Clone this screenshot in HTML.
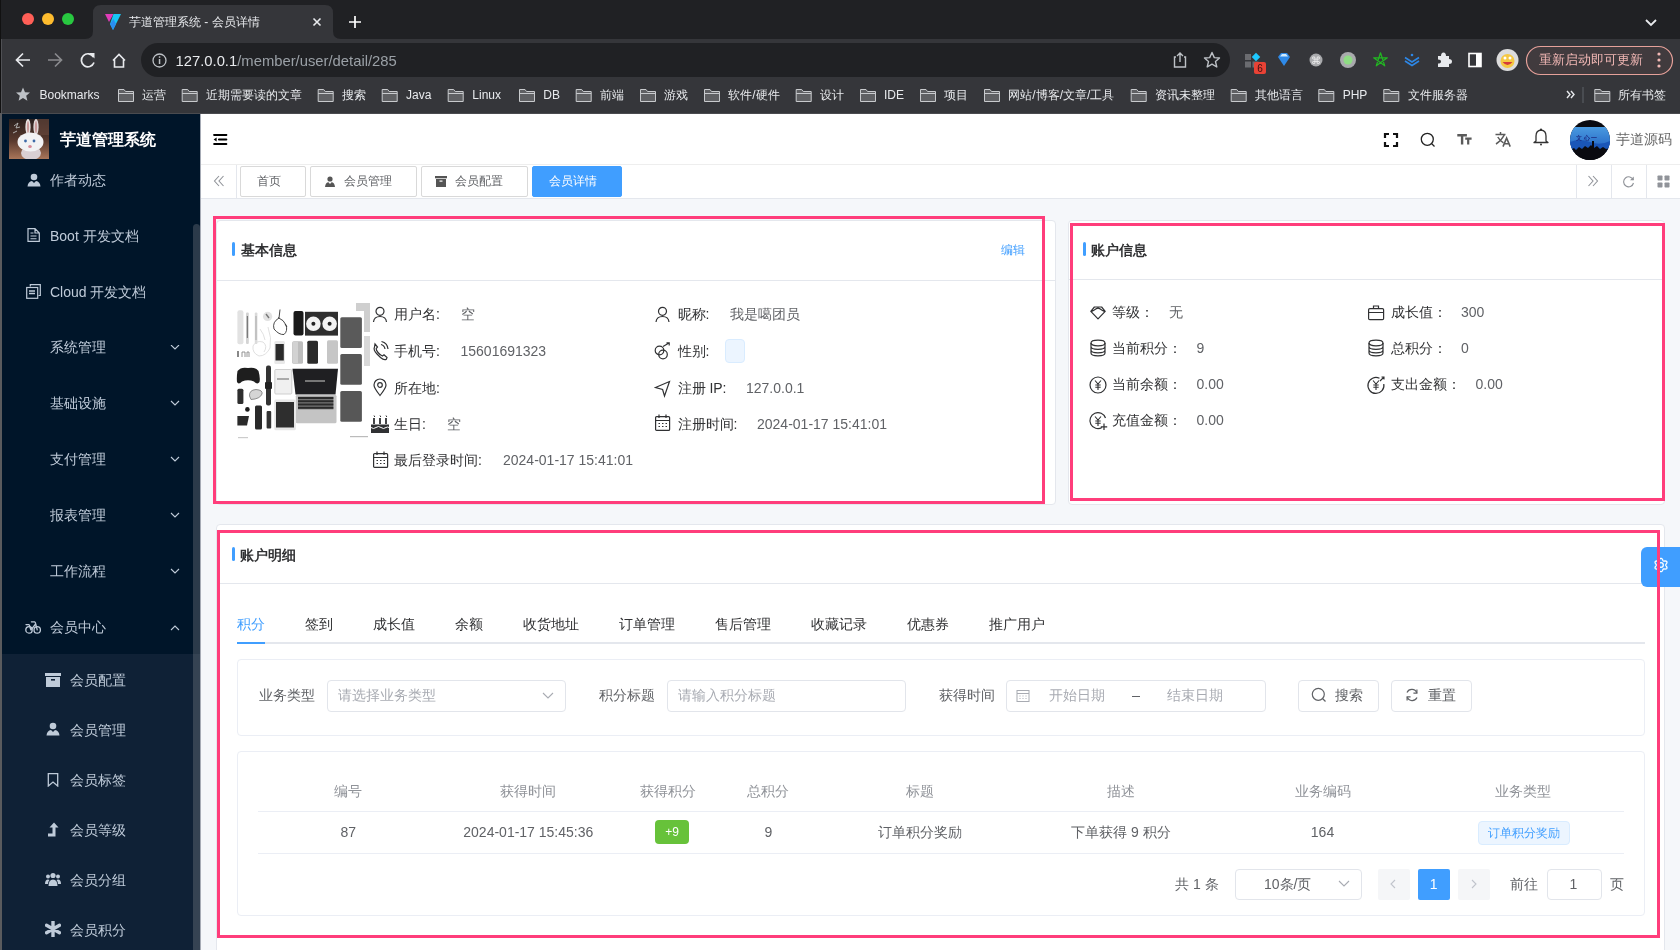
<!DOCTYPE html>
<html><head><meta charset="utf-8">
<style>html{will-change:transform}
*{box-sizing:border-box;margin:0;padding:0}
html,body{width:1680px;height:950px;overflow:hidden;background:#f5f7fa;font-family:"Liberation Sans",sans-serif;font-size:14px;color:#303133}
.a{position:absolute}
.nw{white-space:nowrap}
svg{display:block}
/* chrome */
#tabstrip{left:0;top:0;width:1680px;height:39px;background:#202124}
#toolbar{left:0;top:39px;width:1680px;height:74px;background:#35363a}
.bm{top:87px;height:16px;font-size:12px;color:#e8eaed;line-height:16px}
.fold{top:89px;width:16px;height:13px}
/* sidebar */
#side{left:0;top:114px;width:200px;height:836px;background:#001529;overflow:hidden}
.mi{left:0;width:193px;height:56px;color:#bfcbd9;font-size:14px;line-height:56px}
.mt{left:50px}
.chev{left:170px;width:10px;height:6px}
/* header */
#hdr{left:201px;top:114px;width:1479px;height:51px;background:#fff;border-bottom:1px solid #eee}
#tags{left:201px;top:165px;width:1479px;height:34px;background:#fff;border-bottom:1px solid #e4e7ed}
.tag{top:166px;height:31px;border:1px solid #d9d9d9;border-radius:2px;font-size:12px;color:#606266;line-height:29px;background:#fff}
.card{background:#fff;border:1px solid #e4e7ed;border-radius:4px}
.ttl{font-size:14px;font-weight:bold;color:#303133;line-height:16px}
.bar{width:3px;height:14px;background:#409eff;border-radius:2px}
.lab{font-size:14px;color:#303133;line-height:16px}
.val{font-size:14px;color:#606266;line-height:16px}
.red{border:3px solid #ff2d6f}
.tab{top:616px;font-size:14px;color:#303133;line-height:16px;font-weight:500}
.th{top:783px;font-size:14px;color:#909399;line-height:16px;font-weight:normal;transform:translateX(-50%)}
.td{top:824px;font-size:14px;color:#606266;line-height:16px;transform:translateX(-50%)}
.inp{border:1px solid #e2e5eb;border-radius:4px;background:#fff}
.ph{font-size:14px;color:#a8abb2;line-height:16px}
</style></head>
<body>
<!-- ============ BROWSER CHROME ============ -->

<svg class="a" style="left:0;top:0" width="1680" height="114">
 <rect x="0" y="0" width="1680" height="39" fill="#202124"/>
 <rect x="0" y="39" width="1680" height="74" fill="#35363a"/>
 <path d="M85,39 Q93,39 93,31 L93,13 Q93,5 101,5 L325,5 Q333,5 333,13 L333,31 Q333,39 341,39 Z" fill="#35363a"/>
 <rect x="0" y="113" width="1680" height="1" fill="#4a4b4f"/>
 <rect x="0" y="0" width="1" height="114" fill="#111"/>
 <rect x="1" y="39" width="1" height="75" fill="#4f5054"/>
 <circle cx="28" cy="19" r="6" fill="#ff5f57"/>
 <circle cx="48" cy="19" r="6" fill="#febc2e"/>
 <circle cx="68" cy="19" r="6" fill="#28c840"/>
 <!-- favicon -->
 <polygon points="105,14 113.5,14 109,22" fill="#e03cb8"/>
 <polygon points="113.5,14 121,14 113,30 110,24" fill="#17c6f5"/>
 <polygon points="110,24 113,30 116,24 113.5,19" fill="#2a8ef0"/>
 <!-- close x -->
 <path d="M313.5,18.5 L320.5,25.5 M320.5,18.5 L313.5,25.5" stroke="#e8eaed" stroke-width="1.6"/>
 <!-- plus -->
 <path d="M355,16 L355,28 M349,22 L361,22" stroke="#fff" stroke-width="1.7"/>
 <!-- chevron down -->
 <path d="M1646,20 L1651,25 L1656,20" stroke="#e8eaed" stroke-width="1.8" fill="none"/>
 <!-- nav icons -->
 <path d="M16,60 L30,60 M23,53.5 L16.5,60 L23,66.5" stroke="#e8eaed" stroke-width="1.7" fill="none"/>
 <path d="M48,60 L62,60 M55,53.5 L61.5,60 L55,66.5" stroke="#8a8b8e" stroke-width="1.7" fill="none"/>
 <path d="M93.5,57 A6.5,6.5 0 1 0 94,62.5" stroke="#e8eaed" stroke-width="1.7" fill="none"/>
 <polygon points="89,53 94.5,53 94.5,58.5" fill="#e8eaed"/>
 <path d="M113,60.5 L119,54.5 L125,60.5 M114.5,59 L114.5,67 L123.5,67 L123.5,59" stroke="#e8eaed" stroke-width="1.6" fill="none"/>
 <!-- omnibox -->
 <rect x="141" y="43" width="1089" height="34" rx="17" fill="#202124"/>
 <circle cx="159.5" cy="60.5" r="6.5" stroke="#bdc1c6" stroke-width="1.3" fill="none"/>
 <rect x="158.8" y="59" width="1.5" height="5" fill="#bdc1c6"/>
 <rect x="158.8" y="56.3" width="1.5" height="1.5" fill="#bdc1c6"/>
 <!-- share / star -->
 <path d="M1176,57 L1174.5,57 L1174.5,67 L1185.5,67 L1185.5,57 L1184,57 M1180,62 L1180,53 M1177,56 L1180,53 L1183,56" stroke="#bdc1c6" stroke-width="1.4" fill="none"/>
 <path d="M1212,52.5 L1214.3,57.6 L1219.5,58 L1215.5,61.6 L1216.8,67 L1212,64.2 L1207.2,67 L1208.5,61.6 L1204.5,58 L1209.7,57.6 Z" stroke="#bdc1c6" stroke-width="1.4" fill="none" stroke-linejoin="round"/>
 <!-- extensions -->
 <rect x="1245" y="54" width="6" height="6" fill="#6b6c70"/>
 <rect x="1245" y="61.5" width="6" height="6" fill="#6b6c70"/>
 <rect x="1252.5" y="61.5" width="6" height="6" fill="#6b6c70"/>
 <rect x="1253" y="54" width="6" height="6" fill="#1ec8ff" transform="rotate(45 1256 57)"/>
 <rect x="1254" y="62" width="12" height="12" rx="2" fill="#e94235"/>
 <text x="1260" y="72" font-size="10" fill="#3a1010" text-anchor="middle" font-family="Liberation Sans">6</text>
 <path d="M1278,57 L1281,53 L1287,53 L1290,57 L1284,66 Z" fill="#2f8ae8"/>
 <path d="M1280,56.5 L1282,54 L1286,54 L1288,56.5 Z" fill="#cfeaff"/>
 <circle cx="1316" cy="60" r="6.5" fill="#a9aaad"/>
 <text x="1316" y="64" font-size="10" fill="#eee" text-anchor="middle" font-family="Liberation Sans">&#x2318;</text>
 <circle cx="1348" cy="60" r="8" fill="#a9aaad"/>
 <circle cx="1348" cy="60" r="4.5" fill="#8fdc84"/>
 <path d="M1380.50,52.80 L1384.73,65.82 L1373.65,57.78 L1387.35,57.78 L1376.27,65.82 Z" stroke="#22b622" stroke-width="1.25" fill="none" stroke-linejoin="round"/>
 <path d="M1405,57.5 L1412,62 L1419,57.5 M1405,61 L1412,65.5 L1419,61" stroke="#2d87e6" stroke-width="1.6" fill="none"/>
 <circle cx="1412" cy="55" r="1.3" fill="#2d87e6"/>
 <path d="M1438,56 L1441,56 Q1441,52.5 1443.5,52.5 Q1446,52.5 1446,56 L1449,56 L1449,59 Q1452,59 1452,61.5 Q1452,64 1449,64 L1449,67 L1438,67 L1438,63.5 Q1441,63.5 1441,61.5 Q1441,59.5 1438,59.5 Z" fill="#e8eaed"/>
 <rect x="1469" y="53.5" width="12" height="13" fill="none" stroke="#fff" stroke-width="1.6"/>
 <rect x="1476" y="53.5" width="5" height="13" fill="#fff"/>
 <circle cx="1507.5" cy="60" r="11" fill="#dcdcdc"/>
 <circle cx="1507.5" cy="61" r="7" fill="#f5c842"/>
 <path d="M1502.5,62 Q1507.5,68 1512.5,62 Z" fill="#d43a3a"/>
 <circle cx="1505" cy="58" r="1.5" fill="#fff"/><circle cx="1510" cy="58" r="1.5" fill="#fff"/>
 <!-- update pill -->
 <rect x="1526.5" y="46.5" width="146" height="28" rx="14" fill="#413b3e" stroke="#e6a19a" stroke-width="1.2"/>
 <circle cx="1659" cy="54" r="1.6" fill="#f2b8b5"/><circle cx="1659" cy="60" r="1.6" fill="#f2b8b5"/><circle cx="1659" cy="66" r="1.6" fill="#f2b8b5"/>
 <!-- bookmarks bar -->
 <path d="M23,87.5 L25,92.3 L30,92.5 L26.2,95.8 L27.4,100.8 L23,98 L18.6,100.8 L19.8,95.8 L16,92.5 L21,92.3 Z" fill="#bdc1c6"/>
 <line x1="1583" y1="87" x2="1583" y2="103" stroke="#5f6368" stroke-width="1"/>
 <path d="M1567,91 L1570,94.5 L1567,98 M1571,91 L1574,94.5 L1571,98" stroke="#e8eaed" stroke-width="1.4" fill="none"/>
</svg>
<div class="a nw" style="left:129px;top:14px;font-size:12px;color:#e8eaed;line-height:16px">芋道管理系统 - 会员详情</div>
<div class="a nw" style="left:175.5px;top:52.5px;font-size:14.8px;line-height:17px;color:#9aa0a6"><span style="color:#e8eaed">127.0.0.1</span>/member/user/detail/285</div>
<div class="a nw" style="left:1539px;top:52px;font-size:13px;line-height:16px;color:#f2b8b5">重新启动即可更新</div>
<svg class="a" style="left:0;top:0" width="1680" height="114"><path d="M118.5,89.5 L124,89.5 L125.5,91.5 L133.5,91.5 L133.5,101.5 L118.5,101.5 Z" fill="#5f6063" stroke="#c8cacd" stroke-width="1"/><line x1="118.5" y1="93.5" x2="133.5" y2="93.5" stroke="#c8cacd" stroke-width="1"/><path d="M182.2,89.5 L187.7,89.5 L189.2,91.5 L197.2,91.5 L197.2,101.5 L182.2,101.5 Z" fill="#5f6063" stroke="#c8cacd" stroke-width="1"/><line x1="182.2" y1="93.5" x2="197.2" y2="93.5" stroke="#c8cacd" stroke-width="1"/><path d="M318.2,89.5 L323.7,89.5 L325.2,91.5 L333.2,91.5 L333.2,101.5 L318.2,101.5 Z" fill="#5f6063" stroke="#c8cacd" stroke-width="1"/><line x1="318.2" y1="93.5" x2="333.2" y2="93.5" stroke="#c8cacd" stroke-width="1"/><path d="M382.2,89.5 L387.7,89.5 L389.2,91.5 L397.2,91.5 L397.2,101.5 L382.2,101.5 Z" fill="#5f6063" stroke="#c8cacd" stroke-width="1"/><line x1="382.2" y1="93.5" x2="397.2" y2="93.5" stroke="#c8cacd" stroke-width="1"/><path d="M448.2,89.5 L453.7,89.5 L455.2,91.5 L463.2,91.5 L463.2,101.5 L448.2,101.5 Z" fill="#5f6063" stroke="#c8cacd" stroke-width="1"/><line x1="448.2" y1="93.5" x2="463.2" y2="93.5" stroke="#c8cacd" stroke-width="1"/><path d="M519.5,89.5 L525,89.5 L526.5,91.5 L534.5,91.5 L534.5,101.5 L519.5,101.5 Z" fill="#5f6063" stroke="#c8cacd" stroke-width="1"/><line x1="519.5" y1="93.5" x2="534.5" y2="93.5" stroke="#c8cacd" stroke-width="1"/><path d="M576.2,89.5 L581.7,89.5 L583.2,91.5 L591.2,91.5 L591.2,101.5 L576.2,101.5 Z" fill="#5f6063" stroke="#c8cacd" stroke-width="1"/><line x1="576.2" y1="93.5" x2="591.2" y2="93.5" stroke="#c8cacd" stroke-width="1"/><path d="M640.5,89.5 L646,89.5 L647.5,91.5 L655.5,91.5 L655.5,101.5 L640.5,101.5 Z" fill="#5f6063" stroke="#c8cacd" stroke-width="1"/><line x1="640.5" y1="93.5" x2="655.5" y2="93.5" stroke="#c8cacd" stroke-width="1"/><path d="M704.5,89.5 L710,89.5 L711.5,91.5 L719.5,91.5 L719.5,101.5 L704.5,101.5 Z" fill="#5f6063" stroke="#c8cacd" stroke-width="1"/><line x1="704.5" y1="93.5" x2="719.5" y2="93.5" stroke="#c8cacd" stroke-width="1"/><path d="M796.2,89.5 L801.7,89.5 L803.2,91.5 L811.2,91.5 L811.2,101.5 L796.2,101.5 Z" fill="#5f6063" stroke="#c8cacd" stroke-width="1"/><line x1="796.2" y1="93.5" x2="811.2" y2="93.5" stroke="#c8cacd" stroke-width="1"/><path d="M860.5,89.5 L866,89.5 L867.5,91.5 L875.5,91.5 L875.5,101.5 L860.5,101.5 Z" fill="#5f6063" stroke="#c8cacd" stroke-width="1"/><line x1="860.5" y1="93.5" x2="875.5" y2="93.5" stroke="#c8cacd" stroke-width="1"/><path d="M920.5,89.5 L926,89.5 L927.5,91.5 L935.5,91.5 L935.5,101.5 L920.5,101.5 Z" fill="#5f6063" stroke="#c8cacd" stroke-width="1"/><line x1="920.5" y1="93.5" x2="935.5" y2="93.5" stroke="#c8cacd" stroke-width="1"/><path d="M984.5,89.5 L990,89.5 L991.5,91.5 L999.5,91.5 L999.5,101.5 L984.5,101.5 Z" fill="#5f6063" stroke="#c8cacd" stroke-width="1"/><line x1="984.5" y1="93.5" x2="999.5" y2="93.5" stroke="#c8cacd" stroke-width="1"/><path d="M1131.2,89.5 L1136.7,89.5 L1138.2,91.5 L1146.2,91.5 L1146.2,101.5 L1131.2,101.5 Z" fill="#5f6063" stroke="#c8cacd" stroke-width="1"/><line x1="1131.2" y1="93.5" x2="1146.2" y2="93.5" stroke="#c8cacd" stroke-width="1"/><path d="M1231.2,89.5 L1236.7,89.5 L1238.2,91.5 L1246.2,91.5 L1246.2,101.5 L1231.2,101.5 Z" fill="#5f6063" stroke="#c8cacd" stroke-width="1"/><line x1="1231.2" y1="93.5" x2="1246.2" y2="93.5" stroke="#c8cacd" stroke-width="1"/><path d="M1318.8,89.5 L1324.3,89.5 L1325.8,91.5 L1333.8,91.5 L1333.8,101.5 L1318.8,101.5 Z" fill="#5f6063" stroke="#c8cacd" stroke-width="1"/><line x1="1318.8" y1="93.5" x2="1333.8" y2="93.5" stroke="#c8cacd" stroke-width="1"/><path d="M1383.8,89.5 L1389.3,89.5 L1390.8,91.5 L1398.8,91.5 L1398.8,101.5 L1383.8,101.5 Z" fill="#5f6063" stroke="#c8cacd" stroke-width="1"/><line x1="1383.8" y1="93.5" x2="1398.8" y2="93.5" stroke="#c8cacd" stroke-width="1"/><path d="M1594.8,89.5 L1600.3,89.5 L1601.8,91.5 L1609.8,91.5 L1609.8,101.5 L1594.8,101.5 Z" fill="#5f6063" stroke="#c8cacd" stroke-width="1"/><line x1="1594.8" y1="93.5" x2="1609.8" y2="93.5" stroke="#c8cacd" stroke-width="1"/></svg>
<div class="a nw bm" style="left:39.5px">Bookmarks</div>
<div class="a nw bm" style="left:142px">运营</div>
<div class="a nw bm" style="left:206.3px">近期需要读的文章</div>
<div class="a nw bm" style="left:342.3px">搜索</div>
<div class="a nw bm" style="left:406px">Java</div>
<div class="a nw bm" style="left:472.3px">Linux</div>
<div class="a nw bm" style="left:543.3px">DB</div>
<div class="a nw bm" style="left:600px">前端</div>
<div class="a nw bm" style="left:664px">游戏</div>
<div class="a nw bm" style="left:728.3px">软件/硬件</div>
<div class="a nw bm" style="left:820px">设计</div>
<div class="a nw bm" style="left:884px">IDE</div>
<div class="a nw bm" style="left:944px">项目</div>
<div class="a nw bm" style="left:1008.3px">网站/博客/文章/工具</div>
<div class="a nw bm" style="left:1155px">资讯未整理</div>
<div class="a nw bm" style="left:1255px">其他语言</div>
<div class="a nw bm" style="left:1342.7px">PHP</div>
<div class="a nw bm" style="left:1407.7px">文件服务器</div>
<div class="a nw bm" style="left:1618.3px">所有书签</div>
<!-- ============ SIDEBAR ============ -->
<div id="side" class="a">
 <svg class="a" style="left:9px;top:5px" width="40" height="40" viewBox="0 0 40 40">
  <defs><linearGradient id="rb" x1="0" y1="0" x2="0" y2="1"><stop offset="0" stop-color="#2a201e"/><stop offset="0.55" stop-color="#5a3a2e"/><stop offset="1" stop-color="#a9765a"/></linearGradient></defs>
  <rect width="40" height="40" fill="url(#rb)"/>
  <rect x="26" y="0" width="14" height="16" fill="#6a4a3e" opacity="0.6"/>
  <ellipse cx="19" cy="8" rx="2.6" ry="8" fill="#e9e4e4"/><ellipse cx="27" cy="8" rx="2.6" ry="8" fill="#e0d8d8"/>
  <ellipse cx="19" cy="8" rx="1.1" ry="6" fill="#c99a9a"/><ellipse cx="27" cy="8" rx="1.1" ry="6" fill="#c99a9a"/>
  <ellipse cx="22" cy="34" rx="10" ry="7" fill="#d9cfd3"/>
  <ellipse cx="21.5" cy="23" rx="13" ry="9.5" fill="#f2f2f4"/>
  <circle cx="16.5" cy="22" r="1.4" fill="#3d6aa8"/><circle cx="25" cy="22" r="1.4" fill="#3d6aa8"/>
  <ellipse cx="21" cy="27.5" rx="1.8" ry="1.5" fill="#d88a98"/>
  <path d="M5,7 L9,4 L7,9 L11,8 M4,14 L8,12" stroke="#bbb" stroke-width="0.9" fill="none"/>
 </svg>
 <div class="a nw" style="left:60px;top:17px;font-size:16px;font-weight:bold;color:#fff;line-height:18px">芋道管理系统</div>
 <!-- top-level items -->
 <svg class="a" style="left:27px;top:59px" width="14" height="14" viewBox="0 0 14 14"><circle cx="7" cy="4" r="3.3" fill="#bfcbd9"/><path d="M0.5,13.5 Q1,8.5 5,8 L7,10 L9,8 Q13,8.5 13.5,13.5 Z" fill="#bfcbd9"/></svg>
 <div class="a nw mi" style="top:38px"><span class="a mt">作者动态</span></div>
 <svg class="a" style="left:27px;top:114px" width="13" height="14" viewBox="0 0 13 14"><path d="M1,0.7 L8,0.7 L12.3,5 L12.3,13.3 L1,13.3 Z M8,0.7 L8,5 L12.3,5" fill="none" stroke="#bfcbd9" stroke-width="1.2"/><path d="M3.5,5 L6.5,5 M3.5,8 L9.5,8 M3.5,10.8 L9.5,10.8" stroke="#bfcbd9" stroke-width="1.1"/></svg>
 <div class="a nw mi" style="top:94px"><span class="a mt">Boot 开发文档</span></div>
 <svg class="a" style="left:26px;top:170px" width="15" height="15" viewBox="0 0 15 15"><path d="M4.3,2.5 L4.3,0.7 L14.3,0.7 L14.3,11.5 L12.5,11.5" fill="none" stroke="#bfcbd9" stroke-width="1.2"/><rect x="0.7" y="3.5" width="11" height="10.8" fill="none" stroke="#bfcbd9" stroke-width="1.2"/><path d="M3,7 L9,7 M3,9.5 L9,9.5" stroke="#bfcbd9" stroke-width="1.3"/></svg>
 <div class="a nw mi" style="top:150px"><span class="a mt">Cloud 开发文档</span></div>
 <div class="a nw mi" style="top:205px"><span class="a mt">系统管理</span></div>
 <div class="a nw mi" style="top:261px"><span class="a mt">基础设施</span></div>
 <div class="a nw mi" style="top:317px"><span class="a mt">支付管理</span></div>
 <div class="a nw mi" style="top:373px"><span class="a mt">报表管理</span></div>
 <div class="a nw mi" style="top:429px"><span class="a mt">工作流程</span></div>
 <svg class="a" style="left:25px;top:506px" width="16" height="14" viewBox="0 0 16 14"><circle cx="4" cy="9.9" r="3.2" fill="none" stroke="#bfcbd9" stroke-width="1.3"/><circle cx="12.2" cy="9.9" r="3.2" fill="none" stroke="#bfcbd9" stroke-width="1.3"/><path d="M1,4.6 L3.8,4.6 Q4.8,5 5.4,8.6 L6,9.9 M6.4,1.8 L9.6,1.8 Q10.3,2 10.6,3.5 L12.2,9.9 M6,9.9 L10.6,4" fill="none" stroke="#bfcbd9" stroke-width="1.3" stroke-linecap="round"/></svg>
 <div class="a nw mi" style="top:485px"><span class="a mt">会员中心</span></div>
 <svg class="a" style="left:170px;top:231px" width="10" height="250" viewBox="0 0 10 250">
  <path d="M1,0 L5,4 L9,0 M1,56 L5,60 L9,56 M1,112 L5,116 L9,112 M1,168 L5,172 L9,168 M1,224 L5,228 L9,224" fill="none" stroke="#bfcbd9" stroke-width="1.1"/>
 </svg>
 <svg class="a" style="left:170px;top:511px" width="10" height="6" viewBox="0 0 10 6"><path d="M1,5 L5,1 L9,5" fill="none" stroke="#bfcbd9" stroke-width="1.1"/></svg>
 <!-- submenu -->
 <div class="a" style="left:0;top:540px;width:200px;height:296px;background:#0f2136"></div>
 <svg class="a" style="left:45px;top:559px" width="16" height="14" viewBox="0 0 16 14"><rect x="0" y="0" width="16" height="3" fill="#bfcbd9"/><path d="M1,4 L15,4 L15,14 L1,14 Z" fill="#bfcbd9"/><rect x="6" y="6" width="4" height="1.6" fill="#0f2136"/></svg>
 <div class="a nw mi" style="top:541px;height:50px;line-height:50px"><span class="a" style="left:70px">会员配置</span></div>
 <svg class="a" style="left:46px;top:608px" width="14" height="14" viewBox="0 0 14 14"><circle cx="7" cy="4" r="3.3" fill="#bfcbd9"/><path d="M0.5,13.5 Q1,8.5 5,8 L7,10 L9,8 Q13,8.5 13.5,13.5 Z" fill="#bfcbd9"/></svg>
 <div class="a nw mi" style="top:591px;height:50px;line-height:50px"><span class="a" style="left:70px">会员管理</span></div>
 <svg class="a" style="left:47px;top:659px" width="12" height="14" viewBox="0 0 12 14"><path d="M1.3,0.7 L10.7,0.7 L10.7,13 L6,9 L1.3,13 Z" fill="none" stroke="#bfcbd9" stroke-width="1.3"/></svg>
 <div class="a nw mi" style="top:641px;height:50px;line-height:50px"><span class="a" style="left:70px">会员标签</span></div>
 <svg class="a" style="left:47px;top:708px" width="12" height="15" viewBox="0 0 12 15"><path d="M7,0.5 L11.5,5.5 L8.5,5.5 L8.5,14.5 L1,14.5 L1,11.5 L5.5,11.5 L5.5,5.5 L2.5,5.5 Z" fill="#bfcbd9"/></svg>
 <div class="a nw mi" style="top:691px;height:50px;line-height:50px"><span class="a" style="left:70px">会员等级</span></div>
 <svg class="a" style="left:45px;top:758px" width="16" height="14" viewBox="0 0 16 14"><circle cx="8" cy="3.5" r="2.6" fill="#bfcbd9"/><circle cx="3" cy="4.5" r="2" fill="#bfcbd9"/><circle cx="13" cy="4.5" r="2" fill="#bfcbd9"/><path d="M3.5,14 Q3.5,7.5 8,7.5 Q12.5,7.5 12.5,14 Z" fill="#bfcbd9"/><path d="M0,12 Q0,7.5 3,7.5 Q4,7.5 4.5,8 Q3,9.5 3,12 Z M16,12 Q16,7.5 13,7.5 Q12,7.5 11.5,8 Q13,9.5 13,12 Z" fill="#bfcbd9"/></svg>
 <div class="a nw mi" style="top:741px;height:50px;line-height:50px"><span class="a" style="left:70px">会员分组</span></div>
 <svg class="a" style="left:45px;top:807px" width="16" height="16" viewBox="0 0 16 16"><path d="M8,0.5 L8,15.5 M1.5,4.25 L14.5,11.75 M1.5,11.75 L14.5,4.25" stroke="#bfcbd9" stroke-width="3.4" stroke-linecap="round"/></svg>
 <div class="a nw mi" style="top:791px;height:50px;line-height:50px"><span class="a" style="left:70px">会员积分</span></div>
 <!-- scrollbar -->
 <div class="a" style="left:193px;top:110px;width:7px;height:740px;border-radius:4px;background:rgba(144,147,153,0.3)"></div>
</div>
<div class="a" style="left:200px;top:114px;width:1px;height:836px;background:#a6abb5"></div>
<div class="a" style="left:0;top:113px;width:2px;height:837px;background:#5a5b5e"></div>
<!-- ============ HEADER ============ -->
<div id="hdr" class="a">
 <svg class="a" style="left:12px;top:20px" width="15" height="12" viewBox="0 0 15 12"><path d="M1.2,1 L13.3,1 M6,5.5 L13.3,5.5 M1.2,10 L13.3,10" stroke="#000" stroke-width="2.1" stroke-linecap="round"/><path d="M0.6,5.5 L3.6,3.6 L3.6,7.4 Z" fill="#000"/></svg>
 <!-- fullscreen -->
 <svg class="a" style="left:1182px;top:18px" width="16" height="16" viewBox="0 0 16 16"><path d="M2,6 L2,2 L6,2 M10,2 L14,2 L14,6 M14,10 L14,14 L10,14 M6,14 L2,14 L2,10" fill="none" stroke="#111" stroke-width="2.2"/></svg>
 <!-- search -->
 <svg class="a" style="left:1219px;top:18px" width="16" height="16" viewBox="0 0 16 16"><circle cx="7.3" cy="7.3" r="6" fill="none" stroke="#222" stroke-width="1.3"/><path d="M11.5,11.5 L14.5,14.5" stroke="#222" stroke-width="1.3"/></svg>
 <!-- Tt -->
 <svg class="a" style="left:1256px;top:19px" width="16" height="14" viewBox="0 0 16 14"><path d="M0.3,2.2 L9.9,2.2 M5.1,2 L5.1,11.6" stroke="#5a5a5a" stroke-width="2.4"/><path d="M8.2,5.6 L14.6,5.6 M11.2,5.5 L11.2,11.6" stroke="#5a5a5a" stroke-width="2.2"/></svg>
 <!-- translate -->
 <svg class="a" style="left:1293px;top:17px" width="18" height="17" viewBox="0 0 18 17"><path d="M6.5,1 L6.5,3.2 M1.5,3.6 L11.5,3.6 M10.3,4 Q7,10 2,13 M3.8,6 Q6,10 9.5,11.8" fill="none" stroke="#5a5a5a" stroke-width="1.5"/><path d="M9,15.6 L12.6,7 L16.2,15.6 M10.3,12.8 L14.9,12.8" fill="none" stroke="#5a5a5a" stroke-width="1.6"/></svg>
 <!-- bell -->
 <svg class="a" style="left:1331px;top:14px" width="18" height="18" viewBox="0 0 18 18"><path d="M9,2 Q4,2.5 4,8 L4,13 L2,14.5 L16,14.5 L14,13 L14,8 Q14,2.5 9,2 Z" fill="none" stroke="#333" stroke-width="1.3" stroke-linejoin="round"/><circle cx="9" cy="1.6" r="1.1" fill="#333"/><circle cx="9" cy="16.6" r="1" fill="#333"/></svg>
 <!-- avatar -->
 <svg class="a" style="left:1369px;top:6px" width="40" height="40" viewBox="0 0 40 40">
  <defs><clipPath id="cc"><circle cx="20" cy="20" r="20"/></clipPath><linearGradient id="bl" x1="0" y1="0" x2="0" y2="1"><stop offset="0" stop-color="#4a9ae0"/><stop offset="1" stop-color="#1f5fc0"/></linearGradient></defs>
  <g clip-path="url(#cc)">
   <rect width="40" height="40" fill="#0a0a10"/>
   <rect x="0" y="7" width="40" height="25" fill="url(#bl)"/>
   <path d="M0,22 Q10,18 20,22 T40,21 L40,30 L0,30 Z" fill="#1a56b8"/>
   <text x="6" y="20" font-size="6" fill="#1b2a80" font-weight="bold">文 心 一</text>
   <path d="M0,30 L4,28 L6,30 L9,27 L12,29 L15,26 L18,28 L21,25 L24,28 L27,26 L30,29 L33,27 L36,29 L40,28 L40,40 L0,40 Z" fill="#0a0a10"/>
   <rect x="22" y="21" width="2" height="10" fill="#0a0a10"/>
  </g>
 </svg>
 <div class="a nw" style="left:1415px;top:17px;font-size:14px;color:#666;line-height:16px">芋道源码</div>
</div>
<!-- ============ TAGS ============ -->
<div id="tags" class="a">
 <div class="a" style="left:35px;top:0;width:1px;height:33px;background:#e4e7ed"></div>
 <svg class="a" style="left:12px;top:10px" width="12" height="12" viewBox="0 0 12 12"><path d="M6,1 L1.5,6 L6,11 M10.5,1 L6,6 L10.5,11" fill="none" stroke="#909399" stroke-width="1.1"/></svg>
 <div class="a" style="left:1375px;top:0;width:1px;height:33px;background:#e4e7ed"></div>
 <div class="a" style="left:1410px;top:0;width:1px;height:33px;background:#e4e7ed"></div>
 <div class="a" style="left:1445px;top:0;width:1px;height:33px;background:#e4e7ed"></div>
 <svg class="a" style="left:1386px;top:10px" width="12" height="12" viewBox="0 0 12 12"><path d="M1.5,1 L6,6 L1.5,11 M6,1 L10.5,6 L6,11" fill="none" stroke="#909399" stroke-width="1.1"/></svg>
 <svg class="a" style="left:1421px;top:10px" width="13" height="13" viewBox="0 0 13 13"><path d="M11.3,5 A5,5 0 1 0 11.5,8" fill="none" stroke="#909399" stroke-width="1.1"/><path d="M11.8,1.5 L11.8,5.3 L8,5.3 Z" fill="#909399"/></svg>
 <svg class="a" style="left:1456px;top:10px" width="13" height="13" viewBox="0 0 13 13"><rect x="0.5" y="0.5" width="5" height="5" rx="0.8" fill="#909399"/><rect x="7.5" y="0.5" width="5" height="5" rx="0.8" fill="#909399"/><rect x="0.5" y="7.5" width="5" height="5" rx="0.8" fill="#909399"/><rect x="7.5" y="7.5" width="5" height="5" rx="0.8" fill="#909399"/></svg>
</div>
<div class="a tag" style="left:240px;width:66px"><span class="a nw" style="left:16px;top:0">首页</span></div>
<div class="a tag" style="left:310px;width:107px"><svg class="a" style="left:14px;top:9px" width="10" height="11" viewBox="0 0 10 11"><circle cx="5" cy="3" r="2.6" fill="#555"/><path d="M0,11 Q0.5,6.5 3.5,6.3 L5,8 L6.5,6.3 Q9.5,6.5 10,11 Z" fill="#555"/></svg><span class="a nw" style="left:33px;top:0">会员管理</span></div>
<div class="a tag" style="left:421px;width:107px"><svg class="a" style="left:13px;top:9px" width="12" height="11" viewBox="0 0 12 11"><rect x="0" y="0" width="12" height="2.3" fill="#555"/><rect x="1" y="3" width="10" height="8" fill="#555"/><rect x="4.5" y="4.5" width="3" height="1.2" fill="#fff"/></svg><span class="a nw" style="left:33px;top:0">会员配置</span></div>
<div class="a tag" style="left:532px;width:90px;background:#409eff;border-color:#409eff;color:#fff"><span class="a nw" style="left:16px;top:0">会员详情</span></div>
<!-- ============ CARD 1 ============ -->
<div class="a card" style="left:216px;top:220px;width:840px;height:285px">
 <div class="a" style="left:0;top:59px;width:838px;height:1px;background:#e4e7ed"></div>
</div>
<div class="a bar" style="left:232px;top:242px"></div>
<div class="a nw ttl" style="left:241px;top:242px">基本信息</div>
<div class="a nw" style="left:1001px;top:242px;font-size:12px;color:#409eff;line-height:16px">编辑</div>
<svg class="a" style="left:232px;top:298px" width="140" height="146" viewBox="0 0 140 146">
 <rect x="5" y="4" width="133" height="138" fill="#fff"/>
 <rect x="5.4" y="12.3" width="6" height="34" rx="2" fill="#e2e2e2"/>
 <rect x="14" y="14.5" width="2.8" height="31.5" rx="1" fill="#d4d4d4"/><rect x="14.8" y="18" width="1.2" height="22" fill="#7a7a7a"/>
 <rect x="22.8" y="14.5" width="2.6" height="31.5" rx="1" fill="#dadada"/><rect x="23.5" y="18" width="1" height="24" fill="#aaa"/>
 <circle cx="35.6" cy="18.4" r="4.6" fill="#e2e2e2"/><path d="M34,16 L37,20" stroke="#777" stroke-width="1.4"/>
 <path d="M48,11.5 L47,20 Q40,24 42,31 Q47,37 52,36.5 Q56,33 54,27 Q52,22 46,19.5 M53,26 L55,29" fill="none" stroke="#333" stroke-width="0.9"/>
 <path d="M36,29 Q40,40 38,50 Q34,58 27,58 Q20,55 21,48 Q24,42 31,44 Q36,48 32,54 M28,31 Q32,36 33,42" fill="none" stroke="#dcdcdc" stroke-width="0.9"/>
 <rect x="61.5" y="13" width="10" height="24.6" rx="2" fill="#1a1a1a"/>
 <rect x="73" y="13.8" width="33" height="23.8" fill="#2e2e2e"/>
 <circle cx="81.4" cy="25.8" r="7.3" fill="#f2f2f2"/><circle cx="81.4" cy="25.8" r="2" fill="#222"/>
 <circle cx="97.6" cy="25.8" r="7.3" fill="#f2f2f2"/><circle cx="97.6" cy="25.8" r="2" fill="#222"/>
 <rect x="108.3" y="19.2" width="21.6" height="30.8" rx="1.5" fill="#5a5a5a"/>
 <path d="M124,5 L138,5 L138,34 L132,34 L132,13 L124,13 Z" fill="#cfcfcf"/>
 <rect x="132" y="38" width="6" height="30" fill="#d8d8d8"/>
 <rect x="5" y="53" width="2" height="6" fill="#888"/><path d="M10,59 L10,54 L13,54 L13,59 M15,59 L15,54 L17,54 L17,59" fill="none" stroke="#888" stroke-width="0.9"/>
 <rect x="42.3" y="43" width="10.7" height="23" rx="1.5" fill="#e8e8e8"/><rect x="43.5" y="46" width="8.3" height="16.5" fill="#2a2a2a"/>
 <rect x="60.2" y="43.3" width="10.8" height="22.5" rx="1.5" fill="#bdbdbd"/><rect x="61" y="44" width="5" height="21" fill="#d2d2d2"/>
 <rect x="75.3" y="42.7" width="10.7" height="23" rx="1.5" fill="#2a2a2a"/>
 <rect x="95" y="42.3" width="11" height="23.5" rx="1.5" fill="#c6c6c6"/>
 <rect x="108.3" y="56" width="21.6" height="30.8" rx="1.5" fill="#575757"/>
 <path d="M5.5,73 Q9,68.5 16,70 Q23,68.5 26.5,73 Q28.5,80 27.5,84 Q25.5,87 22,83.5 Q16,81 10,83.5 Q6.5,87 5,84 Q4.5,79 5.5,73 Z" fill="#1e1e1e"/>
 <rect x="34" y="67.6" width="5" height="40" rx="2" fill="#333"/><rect x="33" y="84" width="7" height="7" rx="1" fill="#222"/>
 <rect x="42.8" y="71.5" width="17" height="24.5" rx="1" fill="#f0f0f0" stroke="#c4c4c4" stroke-width="0.8"/><rect x="45" y="80" width="12" height="2" fill="#aaa"/>
 <path d="M60.5,70.7 L106,70.7 L103.5,96.5 L63.5,96.5 Z" fill="#1f1f22"/><rect x="73" y="82" width="20" height="2" fill="#777"/>
 <rect x="63.8" y="96.8" width="40.7" height="28.5" rx="1.5" fill="#c4c4c4"/>
 <rect x="66" y="98.5" width="35.4" height="13" fill="#8a8a8a"/><rect x="66" y="99.0" width="35.4" height="2.2" fill="#2a2a2a"/><rect x="66" y="102.2" width="35.4" height="2.2" fill="#2a2a2a"/><rect x="66" y="105.4" width="35.4" height="2.2" fill="#2a2a2a"/><rect x="66" y="108.6" width="35.4" height="2.2" fill="#2a2a2a"/>
 <rect x="108.3" y="93" width="21.6" height="30.7" rx="1.5" fill="#575757"/>
 <rect x="5.4" y="90.7" width="6" height="15.3" rx="1.5" fill="#2e2e2e"/>
 <path d="M17.5,98 Q17,92 24,91.5 Q31,92 30,96 Q28,101 19,101.5 Z" fill="#d5d5d5" stroke="#777" stroke-width="0.8"/>
 <rect x="23" y="107.6" width="7" height="23.8" rx="1.5" fill="#2a2a2a"/>
 <rect x="34.6" y="113" width="4.6" height="17.6" rx="1" fill="#333"/>
 <rect x="42.3" y="101.4" width="21.5" height="30.8" rx="1.5" fill="#e6e6e6"/><rect x="44" y="104" width="18" height="25.5" fill="#2e2e2e"/>
 <path d="M5.4,118 L17,118 L15,127.6 L5.4,127.6 Z" fill="#2a2a2a"/>
 <circle cx="15.4" cy="111.4" r="2.3" fill="#1a1a1a"/>
 <rect x="6" y="139" width="10" height="1.2" fill="#ccc"/><rect x="118" y="138" width="18" height="1.2" fill="#bbb"/>
</svg>
<!-- desc col 1 -->
<svg class="a" style="left:372px;top:306px" width="17" height="162" viewBox="0 0 17 162" fill="none" stroke="#303133" stroke-width="1.2">
 <circle cx="8" cy="5.3" r="4"/><path d="M1.5,16 Q2,10.5 8,10.5 Q14,10.5 14.5,16"/>
 <path d="M2.5,41 Q1,44 5,48 L8.5,51.5 Q12.5,55 14.5,53 L15,51.5 L12,48.8 L10.4,50 Q8.5,49.5 6,46.5 Q4,44 4.2,42.5 L5.5,41 L3,38 Z"/><path d="M9,38.5 Q12.5,39.5 13,43 M9.5,35.5 Q15.5,37 16,43"/>
 <path d="M8,89.5 Q2,82 2,79 A6,6 0 0 1 14,79 Q14,82 8,89.5 Z"/><circle cx="8" cy="79" r="2.3"/>
</svg>
<svg class="a" style="left:370px;top:415px" width="20" height="18" viewBox="0 0 20 18"><path d="M1,9.5 L19,9.5 L19,18 L1,18 Z" fill="#303133"/><path d="M1,12.5 Q3.5,14.5 6,12.5 Q8.5,10.5 11,12.5 Q13.5,14.5 16,12.5 Q17.5,11.5 19,12.5" stroke="#fff" stroke-width="1" fill="none"/><path d="M4,3 L4,9 M10,3 L10,9 M16,3 L16,9" stroke="#303133" stroke-width="1.8"/><path d="M4,0.5 L4.8,2 M10,0.5 L10.8,2 M16,0.5 L16.8,2" stroke="#303133" stroke-width="1"/></svg>
<svg class="a" style="left:372px;top:451px" width="17" height="17" viewBox="0 0 17 17" fill="none" stroke="#303133" stroke-width="1.2"><rect x="1.6" y="2.6" width="14" height="13.8" rx="1"/><path d="M1.6,6.5 L15.6,6.5 M5,0.5 L5,4 M12,0.5 L12,4"/><path d="M4.5,9.5 L6,9.5 M8,9.5 L9.5,9.5 M11.5,9.5 L13,9.5 M4.5,12.5 L6,12.5 M8,12.5 L9.5,12.5 M11.5,12.5 L13,12.5" stroke-width="1"/></svg>
<div class="a nw lab" style="left:394px;top:306px">用户名:</div><div class="a nw val" style="left:460.5px;top:306px">空</div>
<div class="a nw lab" style="left:394px;top:343px">手机号:</div><div class="a nw val" style="left:460.5px;top:343px">15601691323</div>
<div class="a nw lab" style="left:394px;top:380px">所在地:</div>
<div class="a nw lab" style="left:394px;top:416px">生日:</div><div class="a nw val" style="left:447px;top:416px">空</div>
<div class="a nw lab" style="left:394px;top:452px">最后登录时间:</div><div class="a nw val" style="left:503px;top:452px">2024-01-17 15:41:01</div>
<!-- desc col 2 -->
<svg class="a" style="left:654px;top:306px" width="18" height="126" viewBox="0 0 18 126" fill="none" stroke="#303133" stroke-width="1.2">
 <circle cx="8.5" cy="5.3" r="4"/><path d="M2,16 Q2.5,10.5 8.5,10.5 Q14.5,10.5 15,16"/>
 <circle cx="5.5" cy="44.5" r="4.3"/><circle cx="9" cy="48.5" r="4.3"/><path d="M9,40.5 L15,37 M12.5,36.8 L15.2,36.8 L15.2,39.5"/>
 <path d="M1.5,81.5 L15.5,75.5 L10.5,90 L8.6,83.5 Z"/>
 <rect x="1.6" y="110.6" width="14" height="13.8" rx="1"/><path d="M1.6,114.5 L15.6,114.5 M5,108.5 L5,112 M12,108.5 L12,112"/><path d="M4.5,117.5 L6,117.5 M8,117.5 L9.5,117.5 M11.5,117.5 L13,117.5 M4.5,120.5 L6,120.5 M8,120.5 L9.5,120.5 M11.5,120.5 L13,120.5" stroke-width="1"/>
</svg>
<div class="a nw lab" style="left:677.5px;top:306px">昵称:</div><div class="a nw val" style="left:729.5px;top:306px">我是噶团员</div>
<div class="a nw lab" style="left:677.5px;top:343px">性别:</div><div class="a" style="left:725px;top:339px;width:19.5px;height:23.5px;background:#ecf5ff;border:1px solid #d9ecff;border-radius:4px"></div>
<div class="a nw lab" style="left:677.5px;top:380px">注册 IP:</div><div class="a nw val" style="left:746px;top:380px">127.0.0.1</div>
<div class="a nw lab" style="left:677.5px;top:416px">注册时间:</div><div class="a nw val" style="left:757px;top:416px">2024-01-17 15:41:01</div>

<!-- ============ CARD 2 ============ -->
<div class="a card" style="left:1068px;top:220px;width:597px;height:285px">
 <div class="a" style="left:0;top:58px;width:595px;height:1px;background:#e4e7ed"></div>
</div>
<div class="a bar" style="left:1083px;top:242px"></div>
<div class="a nw ttl" style="left:1091px;top:242px">账户信息</div>
<svg class="a" style="left:1088px;top:303px" width="20" height="130" viewBox="0 0 20 130" fill="none" stroke="#303133" stroke-width="1.2">
 <path d="M6.4,4 L13.6,4 L17.2,8.4 L10,15.9 L2.8,8.4 Z M3.2,8.6 Q6,7.5 8.5,5.6 Q10,4.8 11.5,5.6 Q14,7.5 16.8,8.6" stroke-linejoin="round"/>
 <ellipse cx="10" cy="40" rx="7" ry="2.8"/><path d="M3,40 L3,50 Q3,52.8 10,52.8 Q17,52.8 17,50 L17,40 M3,43.5 Q3,46.3 10,46.3 Q17,46.3 17,43.5 M3,47 Q3,49.8 10,49.8 Q17,49.8 17,47"/>
 <circle cx="10" cy="82" r="8"/><path d="M7,77.5 L10,81 L13,77.5 M10,81 L10,87 M7.3,82 L12.7,82 M7.3,84.3 L12.7,84.3" stroke-width="1.1"/>
 <path d="M17.5,115 A8,8 0 1 0 14,124.5"/><path d="M7,113.5 L10,117 L13,113.5 M10,117 L10,123 M7.3,118 L12.7,118 M7.3,120.3 L12.7,120.3" stroke-width="1.1"/><path d="M16,120.5 L16,127 M12.8,123.8 L19.2,123.8" stroke-width="1.2"/>
</svg>
<svg class="a" style="left:1366px;top:303px" width="20" height="94" viewBox="0 0 20 94" fill="none" stroke="#303133" stroke-width="1.2">
 <rect x="2.6" y="5.6" width="15" height="11" rx="1.2"/><path d="M2.6,9.5 L17.6,9.5 M7.5,5.6 L7.5,3 L12.5,3 L12.5,5.6"/>
 <ellipse cx="10" cy="40" rx="7" ry="2.8"/><path d="M3,40 L3,50 Q3,52.8 10,52.8 Q17,52.8 17,50 L17,40 M3,43.5 Q3,46.3 10,46.3 Q17,46.3 17,43.5 M3,47 Q3,49.8 10,49.8 Q17,49.8 17,47"/>
 <path d="M13.5,75.3 A8,8 0 1 0 17.8,81"/><path d="M7,77.5 L10,81 L13,77.5 M10,81 L10,87 M7.3,82 L12.7,82 M7.3,84.3 L12.7,84.3" stroke-width="1.1"/><path d="M14,78 L18,74 M15.5,74 L18,74 L18,76.5" stroke-width="1.1"/>
</svg>
<div class="a nw lab" style="left:1112px;top:304px">等级：</div><div class="a nw val" style="left:1169px;top:304px">无</div>
<div class="a nw lab" style="left:1112px;top:340px">当前积分：</div><div class="a nw val" style="left:1196.5px;top:340px">9</div>
<div class="a nw lab" style="left:1112px;top:376px">当前余额：</div><div class="a nw val" style="left:1196.5px;top:376px">0.00</div>
<div class="a nw lab" style="left:1112px;top:412px">充值金额：</div><div class="a nw val" style="left:1196.5px;top:412px">0.00</div>
<div class="a nw lab" style="left:1390.5px;top:304px">成长值：</div><div class="a nw val" style="left:1461px;top:304px">300</div>
<div class="a nw lab" style="left:1390.5px;top:340px">总积分：</div><div class="a nw val" style="left:1461px;top:340px">0</div>
<div class="a nw lab" style="left:1390.5px;top:376px">支出金额：</div><div class="a nw val" style="left:1475.5px;top:376px">0.00</div>
<!-- ============ CARD 3 ============ -->
<div class="a card" style="left:216px;top:524px;width:1449px;height:500px">
 <div class="a" style="left:0;top:58px;width:1447px;height:1px;background:#e4e7ed"></div>
</div>
<div class="a bar" style="left:232px;top:547px"></div>
<div class="a nw ttl" style="left:240px;top:547px">账户明细</div>
<!-- tabs -->
<div class="a" style="left:237px;top:642px;width:1408px;height:2px;background:#e4e7ed"></div>
<div class="a" style="left:237px;top:642px;width:28px;height:2px;background:#409eff"></div>
<div class="a nw tab" style="left:237px;color:#409eff">积分</div>
<div class="a nw tab" style="left:305px">签到</div>
<div class="a nw tab" style="left:373px">成长值</div>
<div class="a nw tab" style="left:455px">余额</div>
<div class="a nw tab" style="left:523px">收货地址</div>
<div class="a nw tab" style="left:619px">订单管理</div>
<div class="a nw tab" style="left:715px">售后管理</div>
<div class="a nw tab" style="left:811px">收藏记录</div>
<div class="a nw tab" style="left:907px">优惠券</div>
<div class="a nw tab" style="left:989px">推广用户</div>
<!-- search form -->
<div class="a" style="left:237px;top:658.5px;width:1408px;height:77px;border:1px solid #ebeef5;border-radius:4px;background:#fff"></div>
<div class="a nw lab" style="left:258.5px;top:687px;color:#606266">业务类型</div>
<div class="a inp" style="left:326.5px;top:679.5px;width:239.5px;height:32px"></div>
<div class="a nw ph" style="left:337.5px;top:687px">请选择业务类型</div>
<svg class="a" style="left:542px;top:692px" width="12" height="7" viewBox="0 0 12 7"><path d="M1,1 L6,6 L11,1" fill="none" stroke="#a8abb2" stroke-width="1.1"/></svg>
<div class="a nw lab" style="left:598.5px;top:687px;color:#606266">积分标题</div>
<div class="a inp" style="left:666.5px;top:679.5px;width:239.5px;height:32px"></div>
<div class="a nw ph" style="left:678px;top:687px">请输入积分标题</div>
<div class="a nw lab" style="left:938.5px;top:687px;color:#606266">获得时间</div>
<div class="a inp" style="left:1006px;top:679.5px;width:260px;height:32px"></div>
<svg class="a" style="left:1016px;top:689px" width="14" height="13" viewBox="0 0 14 13" fill="none" stroke="#a8abb2" stroke-width="1"><rect x="1" y="1.5" width="12" height="11"/><path d="M1,4.5 L13,4.5 M3.5,7 L4.5,7 M6.5,7 L7.5,7 M9.5,7 L10.5,7 M3.5,9.5 L4.5,9.5 M6.5,9.5 L7.5,9.5 M9.5,9.5 L10.5,9.5"/></svg>
<div class="a nw ph" style="left:1049px;top:687px">开始日期</div>
<div class="a" style="left:1131.5px;top:695.5px;width:8px;height:1.2px;background:#606266"></div>
<div class="a nw ph" style="left:1167px;top:687px">结束日期</div>
<div class="a inp" style="left:1298px;top:679.5px;width:81px;height:32px"></div>
<svg class="a" style="left:1311px;top:687px" width="16" height="16" viewBox="0 0 16 16"><circle cx="7.3" cy="7.3" r="6" fill="none" stroke="#606266" stroke-width="1.2"/><path d="M11.5,11.5 L14.5,14.5" stroke="#606266" stroke-width="1.2"/></svg>
<div class="a nw lab" style="left:1335px;top:687px;color:#606266">搜索</div>
<div class="a inp" style="left:1391px;top:679.5px;width:81px;height:32px"></div>
<svg class="a" style="left:1405px;top:688px" width="14" height="14" viewBox="0 0 14 14" fill="none" stroke="#606266" stroke-width="1.2"><path d="M11.8,5 A5.3,5.3 0 0 0 2,4.5 M2.2,9 A5.3,5.3 0 0 0 12,9.5"/><path d="M11.9,1.5 L11.9,5.2 L8.4,5.2 M2.1,12.5 L2.1,8.8 L5.6,8.8"/></svg>
<div class="a nw lab" style="left:1428px;top:687px;color:#606266">重置</div>
<!-- table -->
<div class="a" style="left:237px;top:750.5px;width:1408px;height:165px;border:1px solid #ebeef5;border-radius:4px;background:#fff"></div>
<div class="a" style="left:258px;top:810.5px;width:1366px;height:1px;background:#ebeef5"></div>
<div class="a" style="left:258px;top:852.5px;width:1366px;height:1px;background:#ebeef5"></div>
<div class="a nw th" style="left:348.3px">编号</div>
<div class="a nw th" style="left:528.3px">获得时间</div>
<div class="a nw th" style="left:668.3px">获得积分</div>
<div class="a nw th" style="left:768.3px">总积分</div>
<div class="a nw th" style="left:920px">标题</div>
<div class="a nw th" style="left:1121px">描述</div>
<div class="a nw th" style="left:1322.5px">业务编码</div>
<div class="a nw th" style="left:1522.9px">业务类型</div>
<div class="a nw td" style="left:348.3px">87</div>
<div class="a nw td" style="left:528.3px">2024-01-17 15:45:36</div>
<div class="a" style="left:655px;top:820px;width:34px;height:24px;background:#67c23a;border-radius:4px;color:#fff;font-size:12px;line-height:24px;text-align:center">+9</div>
<div class="a nw td" style="left:768.3px">9</div>
<div class="a nw td" style="left:920px">订单积分奖励</div>
<div class="a nw td" style="left:1121px">下单获得 9 积分</div>
<div class="a nw td" style="left:1322.5px">164</div>
<div class="a" style="left:1477.5px;top:820.5px;width:92px;height:24px;background:#ecf5ff;border:1px solid #d9ecff;border-radius:4px;color:#409eff;font-size:12px;line-height:22px;text-align:center">订单积分奖励</div>
<!-- pagination -->
<div class="a nw val" style="left:1175px;top:876px">共 1 条</div>
<div class="a inp" style="left:1234.5px;top:868.5px;width:127px;height:31px"></div>
<div class="a nw val" style="left:1264px;top:876px">10条/页</div>
<svg class="a" style="left:1338px;top:880px" width="12" height="7" viewBox="0 0 12 7"><path d="M1,1 L6,6 L11,1" fill="none" stroke="#a8abb2" stroke-width="1.1"/></svg>
<div class="a" style="left:1377.5px;top:868.5px;width:32px;height:31.5px;background:#f5f6f8;border-radius:2px"></div>
<svg class="a" style="left:1390px;top:879px" width="6" height="10" viewBox="0 0 6 10"><path d="M5,1 L1,5 L5,9" fill="none" stroke="#c0c4cc" stroke-width="1.1"/></svg>
<div class="a" style="left:1418px;top:868.5px;width:31.5px;height:31.5px;background:#409eff;border-radius:2px;color:#fff;font-size:14px;line-height:31.5px;text-align:center">1</div>
<div class="a" style="left:1458px;top:868.5px;width:32px;height:31.5px;background:#f5f6f8;border-radius:2px"></div>
<svg class="a" style="left:1471px;top:879px" width="6" height="10" viewBox="0 0 6 10"><path d="M1,1 L5,5 L1,9" fill="none" stroke="#c0c4cc" stroke-width="1.1"/></svg>
<div class="a nw val" style="left:1509.5px;top:876px">前往</div>
<div class="a inp" style="left:1546.5px;top:868.5px;width:55px;height:31.5px"></div>
<div class="a nw val" style="left:1569.5px;top:876px">1</div>
<div class="a nw val" style="left:1610px;top:876px">页</div>
<!-- settings float -->
<div class="a" style="left:1640.5px;top:546.5px;width:40px;height:40.5px;background:#409eff;border-radius:6px 0 0 6px"></div>
<svg class="a" style="left:1652.5px;top:556.5px" width="16" height="16" viewBox="0 0 16 16"><path d="M8.00,1.30 L8.35,1.36 L8.68,1.53 L8.98,1.79 L9.25,2.12 L9.48,2.49 L9.67,2.87 L9.83,3.23 L9.99,3.53 L10.16,3.77 L10.35,3.93 L10.59,4.02 L10.87,4.04 L11.22,4.03 L11.61,3.99 L12.03,3.97 L12.47,3.98 L12.89,4.04 L13.27,4.17 L13.58,4.38 L13.80,4.65 L13.93,4.98 L13.95,5.35 L13.87,5.75 L13.71,6.14 L13.51,6.52 L13.27,6.88 L13.05,7.20 L12.86,7.49 L12.74,7.75 L12.70,8.00 L12.74,8.25 L12.86,8.51 L13.05,8.80 L13.27,9.12 L13.51,9.48 L13.71,9.86 L13.87,10.25 L13.95,10.65 L13.93,11.02 L13.80,11.35 L13.58,11.62 L13.27,11.83 L12.89,11.96 L12.47,12.02 L12.03,12.03 L11.61,12.01 L11.22,11.97 L10.87,11.96 L10.59,11.98 L10.35,12.07 L10.16,12.23 L9.99,12.47 L9.83,12.77 L9.67,13.13 L9.48,13.51 L9.25,13.88 L8.98,14.21 L8.68,14.47 L8.35,14.64 L8.00,14.70 L7.65,14.64 L7.32,14.47 L7.02,14.21 L6.75,13.88 L6.52,13.51 L6.33,13.13 L6.17,12.77 L6.01,12.47 L5.84,12.23 L5.65,12.07 L5.41,11.98 L5.13,11.96 L4.78,11.97 L4.39,12.01 L3.97,12.03 L3.53,12.02 L3.11,11.96 L2.73,11.83 L2.42,11.62 L2.20,11.35 L2.07,11.02 L2.05,10.65 L2.13,10.25 L2.29,9.86 L2.49,9.48 L2.73,9.12 L2.95,8.80 L3.14,8.51 L3.26,8.25 L3.30,8.00 L3.26,7.75 L3.14,7.49 L2.95,7.20 L2.73,6.88 L2.49,6.52 L2.29,6.14 L2.13,5.75 L2.05,5.35 L2.07,4.98 L2.20,4.65 L2.42,4.38 L2.73,4.17 L3.11,4.04 L3.53,3.98 L3.97,3.97 L4.39,3.99 L4.78,4.03 L5.13,4.04 L5.41,4.02 L5.65,3.93 L5.84,3.77 L6.01,3.53 L6.17,3.23 L6.33,2.87 L6.52,2.49 L6.75,2.12 L7.02,1.79 L7.32,1.53 L7.65,1.36 Z" fill="none" stroke="#fff" stroke-width="1.3" stroke-linejoin="round"/><circle cx="8" cy="8" r="2.3" fill="none" stroke="#fff" stroke-width="1.3"/></svg>
<!-- ============ RED ANNOTATIONS ============ -->
<div class="a" style="left:213px;top:216px;width:832px;height:288px;border:3px solid #ff3d7b"></div>
<div class="a" style="left:1070px;top:223px;width:595px;height:278px;border:3px solid #ff3d7b"></div>
<div class="a" style="left:217px;top:530px;width:1443px;height:408px;border:3px solid #ff3d7b"></div>



</body></html>
